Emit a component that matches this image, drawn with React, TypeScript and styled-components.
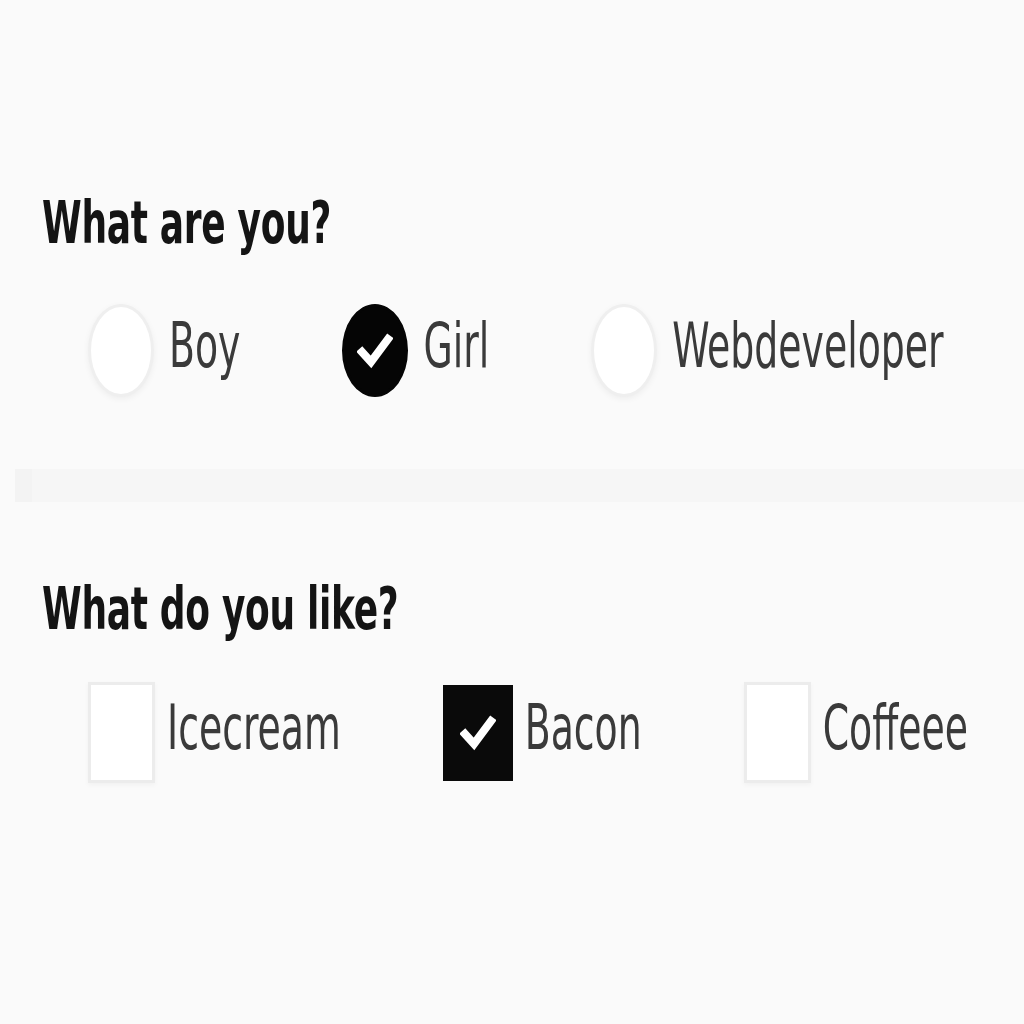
import React from "react";
import styled, { createGlobalStyle } from "styled-components";

const Global = createGlobalStyle`
  html, body { margin: 0; padding: 0; background: #fafafa; }
  body { font-family: "DejaVu Sans Condensed", "Liberation Sans", sans-serif; }
`;

const Page = styled.div`
  width: 1024px;
  height: 1024px;
  box-sizing: border-box;
  padding-top: 196px;
  display: flex;
  flex-direction: column;
  background: #fafafa;
  overflow: hidden;
`;

const Section = styled.section<{ $top?: number }>`
  display: flex;
  flex-direction: column;
  align-items: flex-start;
  padding-left: 42px;
  margin-top: ${(p) => p.$top ?? 0}px;
`;

const Heading = styled.h2`
  margin: 0;
  font-size: 40px;
  line-height: 52px;
  font-weight: 700;
  color: #141414;
  letter-spacing: -0.3px;
  display: inline-block;
  transform: scaleY(1.47);
  transform-origin: left center;
`;

const Options = styled.div<{ $top: number; $gap: number }>`
  display: flex;
  align-items: center;
  gap: ${(p) => p.$gap}px;
  padding-left: 46px;
  margin-top: ${(p) => p.$top}px;
`;

const Option = styled.label<{ $gap: number }>`
  display: flex;
  align-items: center;
  gap: ${(p) => p.$gap}px;
`;

const Radio = styled.span<{ $on?: boolean }>`
  width: 66px;
  height: 93px;
  border-radius: 50%;
  box-sizing: border-box;
  display: flex;
  align-items: center;
  justify-content: center;
  background: ${(p) => (p.$on ? "#050505" : "#ffffff")};
  border: 3px solid ${(p) => (p.$on ? "#050505" : "#efefef")};
  box-shadow: ${(p) => (p.$on ? "none" : "0 2px 6px rgba(0,0,0,0.05)")};
`;

const Box = styled.span<{ $on?: boolean }>`
  width: ${(p) => (p.$on ? 70 : 67)}px;
  height: ${(p) => (p.$on ? 96 : 101)}px;
  box-sizing: border-box;
  display: flex;
  align-items: center;
  justify-content: center;
  background: ${(p) => (p.$on ? "#0a0a0a" : "#ffffff")};
  border: 3px solid ${(p) => (p.$on ? "#0a0a0a" : "#ececec")};
  box-shadow: ${(p) => (p.$on ? "none" : "0 2px 5px rgba(0,0,0,0.04)")};
`;

const Text = styled.span`
  font-size: 42px;
  line-height: 60px;
  font-weight: 400;
  color: #3a3a3a;
  display: inline-block;
  margin-top: -10px;
  transform: scaleY(1.5);
  transform-origin: center;
`;

const Divider = styled.div`
  margin-top: 72px;
  margin-left: 15px;
  height: 33px;
  display: flex;
`;

const DividerCap = styled.div`
  width: 17px;
  background: #f3f3f3;
`;

const DividerBar = styled.div`
  flex: 1;
  background: #f6f6f6;
`;

const Check = () => (
  <svg width="36" height="40" viewBox="0 0 36 40">
    <polyline
      points="5,21 14,31 31,8"
      fill="none"
      stroke="#ffffff"
      strokeWidth="8"
      strokeLinecap="square"
      strokeLinejoin="miter"
    />
  </svg>
);

const radios = [
  { label: "Boy", on: false },
  { label: "Girl", on: true },
  { label: "Webdeveloper", on: false },
];

const checks = [
  { label: "Icecream", on: false },
  { label: "Bacon", on: true },
  { label: "Coffeee", on: false },
];

export default function App() {
  return (
    <>
      <Global />
      <Page>
        <Section>
          <Heading>What are you?</Heading>
          <Options $top={56} $gap={102}>
            {radios.map((r) => (
              <Option key={r.label} $gap={15}>
                <Radio $on={r.on}>{r.on && <Check />}</Radio>
                <Text>{r.label}</Text>
              </Option>
            ))}
          </Options>
        </Section>
        <Divider>
          <DividerCap />
          <DividerBar />
        </Divider>
        <Section $top={80}>
          <Heading>What do you like?</Heading>
          <Options $top={48} $gap={102}>
            {checks.map((c) => (
              <Option key={c.label} $gap={12}>
                <Box $on={c.on}>{c.on && <Check />}</Box>
                <Text>{c.label}</Text>
              </Option>
            ))}
          </Options>
        </Section>
      </Page>
    </>
  );
}
